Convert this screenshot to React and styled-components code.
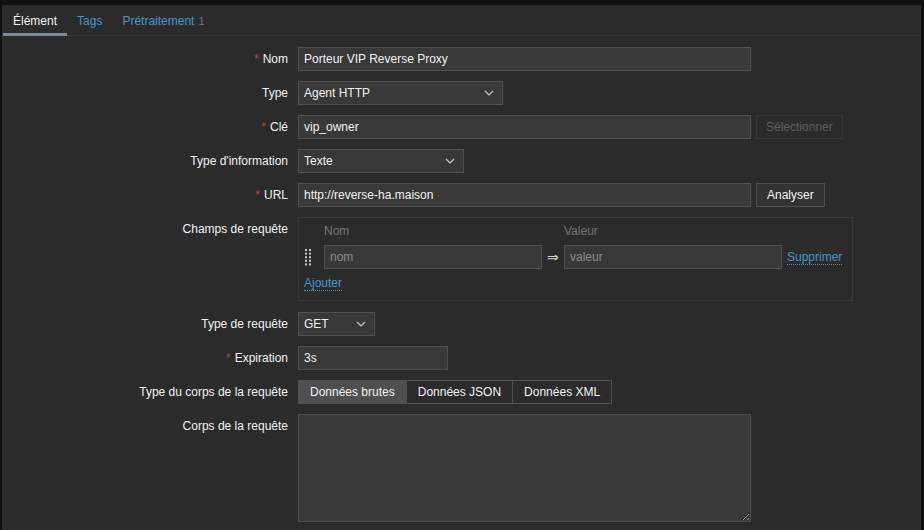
import React from 'react'
import styled, { createGlobalStyle } from 'styled-components'

const colors = {
  page: '#0e1012',
  panel: '#2b2b2b',
  field: '#383838',
  border: '#4f4f4f',
  line: '#383838',
  text: '#f2f2f2',
  muted: '#737373',
  link: '#4796c4',
  required: '#b0474a',
  tabLine: '#768d99',
}

const GlobalStyle = createGlobalStyle`
  html, body {
    margin: 0;
    background: ${colors.page};
    font-family: "Liberation Sans", Arial, sans-serif;
    font-size: 12px;
    color: ${colors.text};
  }
  * { box-sizing: border-box; }
`

const Panel = styled.div`
  margin: 5px 3px 0 2px;
  height: 525px;
  background-color: ${colors.panel};
  overflow: hidden;
`

const TabBar = styled.div`
  display: flex;
  padding-left: 1px;
  border-bottom: 1px solid ${colors.line};
`

const Tab = styled.div`
  height: 31px;
  line-height: 30px;
  padding: 0 10px;
  color: ${p => (p.$active ? colors.text : colors.link)};
  border-bottom: 3px solid ${p => (p.$active ? colors.tabLine : 'transparent')};
  margin-bottom: -1px;
  padding-top: 1px;
`

const Count = styled.span`
  color: ${colors.muted};
  font-size: 11px;
  margin-left: 4px;
`

const Form = styled.div`
  display: grid;
  grid-template-columns: 286px 1fr;
  column-gap: 10px;
  padding-top: 11px;
`

const Label = styled.div`
  text-align: right;
  line-height: 24px;
  margin-bottom: ${p => p.$gap || 10}px;
  white-space: nowrap;
`

const Star = styled.span`
  color: ${colors.required};
  margin-right: 4px;
`

const Field = styled.div`
  display: flex;
  align-items: flex-start;
  gap: 5px;
  margin-bottom: ${p => p.$gap || 10}px;
`

const Input = styled.div`
  width: ${p => p.$w}px;
  height: 24px;
  line-height: 22px;
  padding: 0 5px;
  background: ${colors.field};
  border: 1px solid ${colors.border};
  color: ${p => (p.$placeholder ? '#8a8a8a' : colors.text)};
  white-space: nowrap;
  overflow: hidden;
`

const SelectBox = styled(Input)`
  display: flex;
  align-items: center;
  justify-content: space-between;
  padding-right: 8px;
`

const Button = styled.div`
  height: 24px;
  line-height: 22px;
  padding: 0 ${p => (p.$disabled ? 9 : 10)}px;
  border: 1px solid ${p => (p.$disabled ? colors.line : colors.border)};
  background: ${p => (p.$disabled ? colors.panel : '#323232')};
  color: ${p => (p.$disabled ? '#5e5e5e' : colors.text)};
`

const Chevron = () => (
  <svg width="10" height="6" viewBox="0 0 10 6">
    <path d="M1 1l4 4 4-4" fill="none" stroke="#c8c8c8" strokeWidth="1.2" />
  </svg>
)

const Select = ({ w, children }) => (
  <SelectBox $w={w}>
    <span>{children}</span>
    <Chevron />
  </SelectBox>
)

const Box = styled.div`
  width: 555px;
  height: 84px;
  border: 1px solid ${colors.line};
  padding: 4px 5px 0 5px;
  margin-bottom: 11px;
`

const PairGrid = styled.div`
  display: grid;
  grid-template-columns: 20px 218px 22px 218px auto;
  align-items: center;
`

const Head = styled.div`
  color: ${colors.muted};
  line-height: 18px;
  margin-bottom: 5px;
`

const Arrow = styled.div`
  text-align: center;
  font-size: 14px;
  color: #d0d0d0;
`

const Link = styled.span`
  color: ${colors.link};
  border-bottom: 1px dotted ${colors.link};
  line-height: 14px;
`

const RemoveLink = styled(Link)`
  margin-left: 5px;
  justify-self: start;
`

const AddRow = styled.div`
  margin-top: 5px;
  line-height: 18px;
`

const Handle = () => (
  <svg width="8" height="18" viewBox="0 0 8 18">
    {[0, 1, 2, 3, 4].map(r =>
      [0, 1].map(c => (
        <rect key={`${r}-${c}`} x={1 + c * 4} y={1 + r * 3.6} width="2" height="2" fill="#c8c8c8" />
      ))
    )}
  </svg>
)

const Segmented = styled.div`
  display: flex;
  border: 1px solid ${colors.border};
  height: 24px;
`

const Segment = styled.div`
  line-height: 22px;
  padding: 0 11px;
  background: ${p => (p.$active ? colors.border : colors.panel)};
  border-left: ${p => (p.$first ? 'none' : `1px solid ${colors.border}`)};
`

const TextArea = styled.textarea`
  width: 453px;
  height: 108px;
  background: ${colors.field};
  border: 1px solid ${colors.border};
  color: ${colors.text};
  font: inherit;
  display: block;
  outline: none;
`

export default function App() {
  return (
    <>
      <GlobalStyle />
      <Panel>
        <TabBar>
          <Tab $active>Élément</Tab>
          <Tab>Tags</Tab>
          <Tab>
            Prétraitement<Count>1</Count>
          </Tab>
        </TabBar>
        <Form>
          <Label><Star>*</Star>Nom</Label>
          <Field><Input $w={453}>Porteur VIP Reverse Proxy</Input></Field>

          <Label>Type</Label>
          <Field><Select w={205}>Agent HTTP</Select></Field>

          <Label><Star>*</Star>Clé</Label>
          <Field>
            <Input $w={453}>vip_owner</Input>
            <Button $disabled>Sélectionner</Button>
          </Field>

          <Label>Type d'information</Label>
          <Field><Select w={166}>Texte</Select></Field>

          <Label><Star>*</Star>URL</Label>
          <Field>
            <Input $w={453}>http://reverse-ha.maison</Input>
            <Button>Analyser</Button>
          </Field>

          <Label $gap={11}>Champs de requête</Label>
          <Box>
            <PairGrid>
              <span />
              <Head>Nom</Head>
              <span />
              <Head>Valeur</Head>
              <span />
              <Handle />
              <Input $w={218} $placeholder>nom</Input>
              <Arrow>⇒</Arrow>
              <Input $w={218} $placeholder>valeur</Input>
              <RemoveLink>Supprimer</RemoveLink>
            </PairGrid>
            <AddRow><Link>Ajouter</Link></AddRow>
          </Box>

          <Label>Type de requête</Label>
          <Field><Select w={77}>GET</Select></Field>

          <Label><Star>*</Star>Expiration</Label>
          <Field><Input $w={150}>3s</Input></Field>

          <Label>Type du corps de la requête</Label>
          <Field>
            <Segmented>
              <Segment $active $first>Données brutes</Segment>
              <Segment>Données JSON</Segment>
              <Segment>Données XML</Segment>
            </Segmented>
          </Field>

          <Label>Corps de la requête</Label>
          <Field><TextArea /></Field>
        </Form>
      </Panel>
    </>
  )
}
